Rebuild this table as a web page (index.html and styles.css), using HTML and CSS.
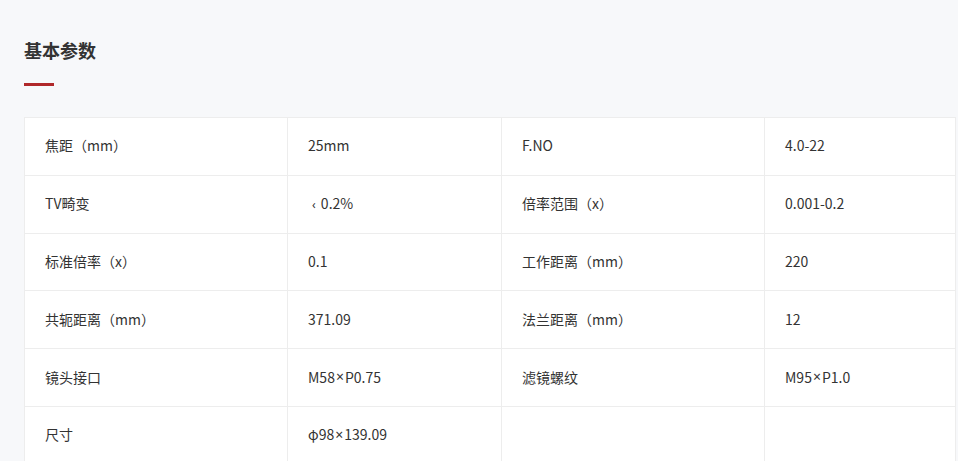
FILE: index.html
```html
<!DOCTYPE html>
<html lang="zh-CN">
<head>
<meta charset="utf-8">
<title>基本参数</title>
<link rel="stylesheet" href="styles.css">
</head>
<body>
<section class="params">
  <h2 class="params-title">基本参数</h2>
  <div class="params-bar"></div>
  <div class="spec-grid">
    <div class="cell">焦距（mm）</div><div class="cell">25mm</div><div class="cell">F.NO</div><div class="cell">4.0-22</div>
    <div class="cell">TV畸变</div><div class="cell"><span><span class="lt">‹</span> 0.2%</span></div><div class="cell">倍率范围（x）</div><div class="cell">0.001-0.2</div>
    <div class="cell">标准倍率（x）</div><div class="cell">0.1</div><div class="cell">工作距离（mm）</div><div class="cell">220</div>
    <div class="cell">共轭距离（mm）</div><div class="cell">371.09</div><div class="cell">法兰距离（mm）</div><div class="cell">12</div>
    <div class="cell">镜头接口</div><div class="cell">M58<span class="x">×</span>P0.75</div><div class="cell">滤镜螺纹</div><div class="cell">M95<span class="x">×</span>P1.0</div>
    <div class="cell">尺寸</div><div class="cell">φ98<span class="x">×</span>139.09</div><div class="cell"></div><div class="cell"></div>
  </div>
</section>
</body>
</html>
```
FILE: styles.css
```css
html, body {
  margin: 0;
  padding: 0;
  background: #f7f8fa;
  overflow: hidden;
}
body {
  font-family: "Noto Sans CJK SC", "Noto Sans", "Liberation Sans", sans-serif;
  color: #333;
}
.params {
  padding: 37px 0 0 24px;
}
.params-title {
  margin: 0;
  font-size: 18px;
  line-height: 26px;
  font-weight: 700;
  color: #333;
}
.params-bar {
  width: 30px;
  height: 3px;
  background: #b0282a;
  margin-top: 20px;
}
.spec-grid {
  margin-top: 31px;
  width: 931px;
  display: grid;
  grid-template-columns: 263px 214px 263px 191px;
  grid-auto-rows: 57.8px;
  border-left: 1px solid #ededed;
  border-top: 1px solid #ededed;
  background: #fff;
}
.cell {
  box-sizing: border-box;
  border-right: 1px solid #ededed;
  border-bottom: 1px solid #ededed;
  padding: 0 0 2px 20px;
  display: flex;
  align-items: center;
  font-size: 14px;
  color: #333;
  white-space: pre;
}
.lt {
  font-family: "Noto Sans", "Liberation Sans", sans-serif;
  font-size: 12px;
  margin-left: 4px;
  margin-right: 2px;
}
.x {
  font-family: "Noto Sans", "Liberation Sans", sans-serif;
  margin: 0 1px;
}
```
